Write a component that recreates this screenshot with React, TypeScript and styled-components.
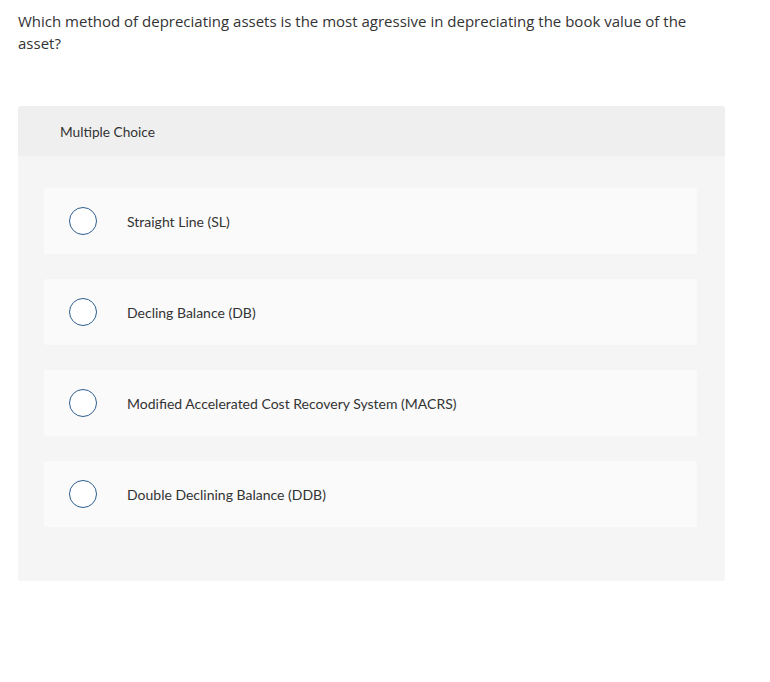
import styled, { createGlobalStyle } from "styled-components";

const GlobalStyle = createGlobalStyle`
  body {
    margin: 0;
    background: #ffffff;
    font-family: Lato, "Open Sans", Arial, sans-serif;
    color: #333333;
  }
`;

const Page = styled.main`
  width: 707px;
  padding: 10px 0 0 18px;
`;

const Question = styled.p`
  margin: 0 0 52px;
  max-width: 690px;
  font-family: "Open Sans", Arial, sans-serif;
  font-size: 15px;
  line-height: 22px;
  color: #333;
`;

const Panel = styled.section`
  background: #f5f5f5;
  border-radius: 3px;
  overflow: hidden;
`;

const PanelHeader = styled.div`
  height: 50px;
  display: flex;
  align-items: center;
  padding-left: 42px;
  background: #efefef;
  font-size: 13.7px;
  color: #333;
`;

const Options = styled.div`
  display: flex;
  flex-direction: column;
  gap: 25px;
  padding: 32px 28px 54px 26px;
`;

const Option = styled.label`
  height: 66px;
  display: flex;
  align-items: center;
  padding-left: 25px;
  background: #fafafa;
  border-radius: 3px;
  font-size: 14px;
  color: #333;
  cursor: pointer;
`;

const Radio = styled.span`
  width: 26px;
  height: 26px;
  border: 1.5px solid #2d5f8e;
  border-radius: 50%;
  background: #fff;
  margin-right: 30px;
  flex-shrink: 0;
`;

const choices = [
  "Straight Line (SL)",
  "Decling Balance (DB)",
  "Modified Accelerated Cost Recovery System (MACRS)",
  "Double Declining Balance (DDB)",
];

export default function App() {
  return (
    <Page>
      <GlobalStyle />
      <Question>
        Which method of depreciating assets is the most agressive in depreciating the book value of the
        asset?
      </Question>
      <Panel>
        <PanelHeader>Multiple Choice</PanelHeader>
        <Options>
          {choices.map((c) => (
            <Option key={c}>
              <Radio />
              {c}
            </Option>
          ))}
        </Options>
      </Panel>
    </Page>
  );
}
